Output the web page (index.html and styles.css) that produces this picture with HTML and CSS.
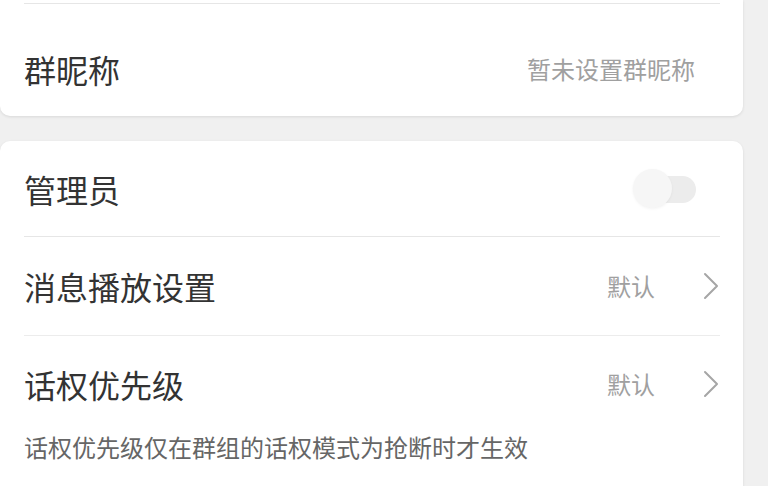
FILE: index.html
```html
<!DOCTYPE html>
<html lang="zh">
<head>
<meta charset="utf-8">
<link rel="stylesheet" href="styles.css">
</head>
<body>
<div class="page">
  <section class="card card-top">
    <div class="divider"></div>
    <div class="row row-nick">
      <span class="label">群昵称</span>
      <span class="value">暂未设置群昵称</span>
    </div>
  </section>

  <section class="card card-main">
    <div class="row row-admin">
      <span class="label">管理员</span>
      <span class="switch"><span class="track"></span><span class="thumb"></span></span>
    </div>
    <div class="row row-play">
      <span class="label">消息播放设置</span>
      <span class="right">
        <span class="value">默认</span>
        <svg class="chev" width="18" height="28" viewBox="0 0 18 28"><path d="M3 2 L15 14 L3 26" fill="none" stroke="#a6a6a6" stroke-width="2" stroke-linecap="round" stroke-linejoin="round"/></svg>
      </span>
    </div>
    <div class="row row-prio">
      <span class="label">话权优先级</span>
      <span class="right">
        <span class="value">默认</span>
        <svg class="chev" width="18" height="28" viewBox="0 0 18 28"><path d="M3 2 L15 14 L3 26" fill="none" stroke="#a6a6a6" stroke-width="2" stroke-linecap="round" stroke-linejoin="round"/></svg>
      </span>
    </div>
    <p class="note">话权优先级仅在群组的话权模式为抢断时才生效</p>
  </section>
</div>
</body>
</html>
```
FILE: styles.css
```css
html, body {
  margin: 0;
  padding: 0;
  background: #f0f0f0;
  overflow: hidden;
}
body {
  width: 768px;
  height: 486px;
  font-family: "Noto Sans CJK SC", "Noto Sans", sans-serif;
  color: #333333;
}
.page {
  display: flex;
  flex-direction: column;
  gap: 25px;
  height: 486px;
}
.card {
  width: 743px;
  background: #ffffff;
  border-radius: 10px;
  box-shadow: 0 1px 3px rgba(0, 0, 0, 0.10);
  box-sizing: border-box;
}
.card-top {
  flex: none;
  border-top-left-radius: 0;
  border-top-right-radius: 0;
  padding-top: 3px;
  height: 116px;
}
.card-main {
  flex: 1;
  border-bottom-left-radius: 0;
  border-bottom-right-radius: 0;
}
.divider {
  height: 1px;
  margin: 0 23px 0 24px;
  background: #e6e6e6;
}
.row {
  display: flex;
  align-items: center;
  justify-content: space-between;
  margin: 0 23px 0 24px;
  box-sizing: border-box;
}
.row-nick {
  height: 112px;
  padding-top: 18px;
}
.label {
  font-size: 32px;
  line-height: 40px;
  color: #333333;
}
.value {
  font-size: 24px;
  line-height: 30px;
  color: #a0a0a0;
}
.row-nick .value {
  margin-right: 25px;
}
.row-admin {
  height: 96px;
  border-bottom: 1px solid #e6e6e6;
}
.row-play {
  height: 99px;
  border-bottom: 1px solid #ececec;
}
.row-prio {
  height: 96px;
}
.right {
  display: flex;
  align-items: center;
  gap: 47px;
}
.chev {
  display: block;
}
.switch {
  position: relative;
  width: 66px;
  height: 42px;
  margin-right: 21px;
}
.track {
  position: absolute;
  left: 15px;
  top: 8px;
  width: 48px;
  height: 27px;
  border-radius: 14px;
  background: #ececec;
}
.thumb {
  position: absolute;
  left: 0;
  top: 1px;
  width: 39px;
  height: 39px;
  border-radius: 50%;
  background: #f6f6f6;
  box-shadow: 0 1px 3px rgba(0, 0, 0, 0.05);
}
.note {
  margin: 0;
  padding: 0 24px;
  font-size: 24px;
  line-height: 30px;
  color: #666666;
}
```
